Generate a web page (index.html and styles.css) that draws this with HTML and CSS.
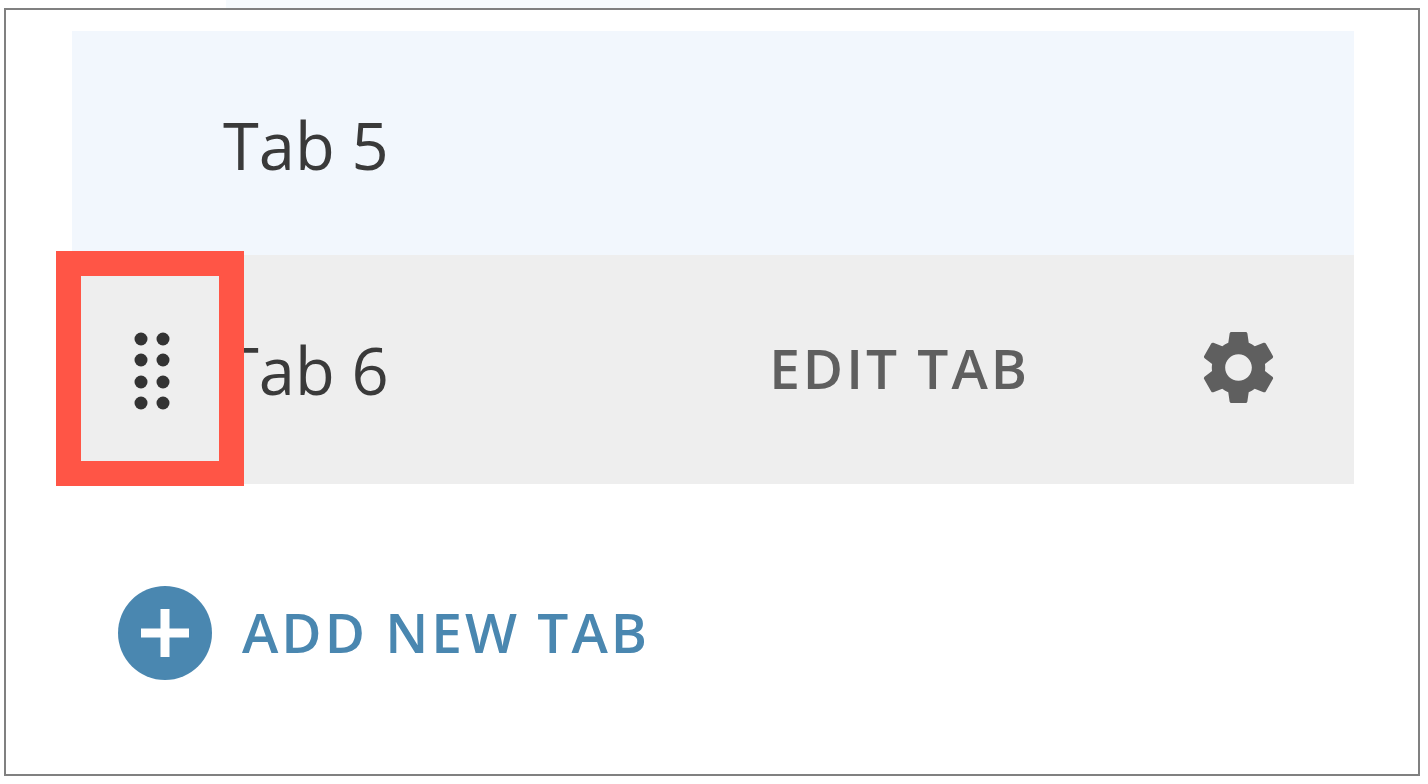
FILE: index.html
```html
<!DOCTYPE html>
<html lang="en">
<head>
  <meta charset="UTF-8" />
  <meta name="viewport" content="width=device-width, initial-scale=1" />
  <title>Tabs</title>
  <link rel="stylesheet" href="styles.css">
</head>
<body>
  <div class="top-strip"></div>
  <div class="frame">
    <div class="tab-row tab-active">
      <span class="tab-name">Tab 5</span>
    </div>
    <div class="tab-row tab-hover">
      <span class="tab-name">Tab 6</span>
      <a class="edit-link" href="#">Edit Tab</a>
      <button class="gear-btn" aria-label="Settings">
        <svg viewBox="0 0 24 24" width="89" height="89">
          <path d="M19.14 12.94c.04-.3.06-.61.06-.94 0-.32-.02-.64-.07-.94l2.03-1.58c.18-.14.23-.41.12-.61l-1.92-3.32c-.12-.22-.37-.29-.59-.22l-2.39.96c-.5-.38-1.03-.7-1.62-.94l-.36-2.54c-.04-.24-.24-.41-.48-.41h-3.84c-.24 0-.43.17-.47.41l-.36 2.54c-.59.24-1.13.57-1.62.94l-2.39-.96c-.22-.08-.47 0-.59.22L2.74 8.87c-.12.21-.08.47.12.61l2.03 1.58c-.05.3-.09.63-.09.94s.02.64.07.94l-2.03 1.58c-.18.14-.23.41-.12.61l1.92 3.32c.12.22.37.29.59.22l2.39-.96c.5.38 1.03.7 1.62.94l.36 2.54c.05.24.24.41.48.41h3.84c.24 0 .44-.17.47-.41l.36-2.54c.59-.24 1.13-.56 1.62-.94l2.39.96c.22.08.47 0 .59-.22l1.92-3.32c.12-.22.07-.47-.12-.61l-2.01-1.58zM12 15.6c-1.98 0-3.6-1.62-3.6-3.6s1.62-3.6 3.6-3.6 3.6 1.62 3.6 3.6-1.62 3.6-3.6 3.6z"/>
        </svg>
      </button>
      <!-- highlight around the drag handle -->
      <div class="drag-handle">
        <svg viewBox="0 0 36 78" width="36" height="78">
          <circle cx="7" cy="7" r="6.5"/><circle cx="29" cy="7" r="6.5"/>
          <circle cx="7" cy="28" r="6.5"/><circle cx="29" cy="28" r="6.5"/>
          <circle cx="7" cy="50" r="6.5"/><circle cx="29" cy="50" r="6.5"/>
          <circle cx="7" cy="71" r="6.5"/><circle cx="29" cy="71" r="6.5"/>
        </svg>
      </div>
    </div>
    <a class="add-tab" href="#">
      <span class="add-icon">
        <svg viewBox="0 0 48 48" width="48" height="48">
          <path d="M19.5 0h9v19.5H48v9H28.500V48h-9V28.500H0v-9h19.5z"/>
        </svg>
      </span>
      <span class="add-label">Add New Tab</span>
    </a>
  </div>
</body>
</html>
```
FILE: styles.css
```css
* {
  box-sizing: border-box;
}
body {
  font-family: 'Open Sans', 'Noto Sans', sans-serif;
  background: #fff;
  margin: 0 8px 8px 4px;
}
/* bottom edge of the row cut off above the frame */
.top-strip {
  height: 8px;
  margin: 0 770px 0 222px;
  background: #f6fafd;
}
.frame {
  height: 768px;
  border: 2px solid #808080;
  padding: 21px 64px 0 66px;
}
.tab-row {
  display: flex;
  align-items: center;
  padding-left: 151px;
  position: relative;
}
.tab-active {
  height: 224px;
  padding-top: 4px;
  background: #f2f7fd;
}
.tab-hover {
  height: 229px;
  background: #eee;
}
.tab-name {
  font-size: 65px;
  color: #3a3a3a;
}
.edit-link {
  margin-left: auto;
  margin-bottom: 4px;
  font-size: 55px;
  font-weight: 600;
  letter-spacing: 3px;
  text-transform: uppercase;
  text-decoration: none;
  color: #5f5f5f;
}
.gear-btn {
  display: flex;
  margin: 0 71px 4px 164px;
  padding: 0;
  border: none;
  background: none;
  fill: #5f5f5f;
}
.drag-handle {
  position: absolute;
  left: -16px;
  top: -4px;
  width: 188px;
  height: 235px;
  border: 25px solid #ff5546;
  padding: 4px 0 0 4px;
  display: flex;
  align-items: center;
  justify-content: center;
  fill: #333;
}
.add-tab {
  display: flex;
  align-items: center;
  gap: 30px;
  margin: 102px 0 0 46px;
  text-decoration: none;
}
.add-icon {
  display: flex;
  align-items: center;
  justify-content: center;
  width: 94px;
  height: 94px;
  border-radius: 50%;
  background: #4a87b0;
  fill: #fff;
}
.add-label {
  margin-bottom: 4px;
  font-size: 55px;
  font-weight: 600;
  letter-spacing: 3px;
  text-transform: uppercase;
  color: #4a87b0;
}
```
